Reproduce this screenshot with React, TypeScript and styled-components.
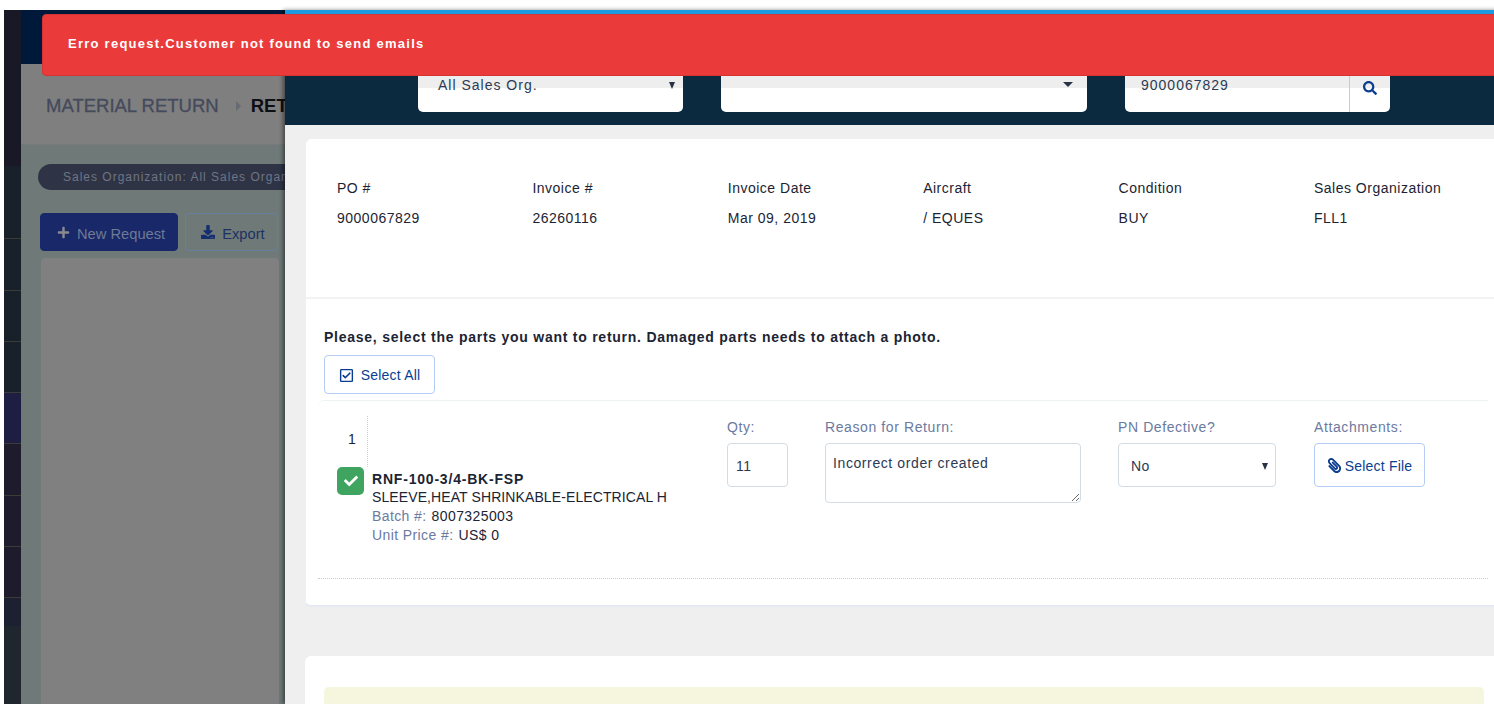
import styled, { createGlobalStyle } from 'styled-components';
import { FaCheck, FaDownload, FaPaperclip, FaPlus, FaRegCheckSquare, FaSearch } from 'react-icons/fa';

const GlobalStyle = createGlobalStyle`
  html, body {
    margin: 0;
    padding: 0;
    background: #fff;
    overflow: hidden;
  }
  * {
    box-sizing: border-box;
  }
`;

const Page = styled.div`
  position: relative;
  width: 1494px;
  height: 704px;
  overflow: hidden;
  padding: 10px 0 0 4px;
  font-family: "Liberation Sans", Arial, sans-serif;
  font-size: 14px;
  color: #1c2433;
`;

const Shell = styled.div`
  display: flex;
  height: 694px;
`;

const Sidebar = styled.div`
  width: 17px;
  display: flex;
  flex-direction: column;
  flex-shrink: 0;
`;

const SideItem = styled.div<{ $h: number; $tone: string; $line?: boolean }>`
  height: ${(p) => p.$h}px;
  background: ${(p) => p.$tone};
  border-bottom: ${(p) => (p.$line ? '1px solid #3b3b38' : 'none')};
`;

const SideFill = styled.div`
  flex: 1;
  background: #1f262e;
`;

const Main = styled.div`
  flex: 1;
  display: flex;
  flex-direction: column;
`;

const TopBar = styled.div`
  height: 54px;
  background: #00193a;
`;

const TitleBar = styled.div`
  height: 81px;
  background: #7f7f7f;
  border-bottom: 1px solid #767a7e;
  display: flex;
  align-items: center;
  padding: 4px 0 0 25px;
  font-size: 18.5px;
  color: #454a5c;
  -webkit-text-stroke: 0.3px #454a5c;
`;

const Caret = styled.span`
  width: 0;
  height: 0;
  margin: 0 10px 0 17px;
  border-left: 5px solid #666b73;
  border-top: 5px solid transparent;
  border-bottom: 5px solid transparent;
`;

const TitleStrong = styled.strong`
  color: #0d0f14;
  -webkit-text-stroke: 0;
`;

const Content = styled.div`
  flex: 1;
  background: #6f7a78;
  padding: 19px 0 0 17px;
`;

const FilterPill = styled.div`
  height: 26px;
  width: 340px;
  border-radius: 13px;
  background: #2e3446;
  color: #6e7584;
  font-size: 12px;
  letter-spacing: 1px;
  line-height: 26px;
  padding-left: 25px;
  white-space: nowrap;
`;

const ActionRow = styled.div`
  display: flex;
  gap: 7px;
  margin: 23px 0 7px 2px;
`;

const BackButton = styled.div<{ $primary?: boolean }>`
  height: 38px;
  padding: 3px 12px 0 ${(p) => (p.$primary ? 16 : 15)}px;
  display: flex;
  align-items: center;
  gap: 7px;
  border-radius: 4px;
  font-size: 14.7px;
  background: ${(p) => (p.$primary ? '#182868' : 'transparent')};
  color: ${(p) => (p.$primary ? '#6f7a94' : '#1d3163')};
  border: 1px solid ${(p) => (p.$primary ? '#182868' : '#68809c')};
  svg {
    font-size: ${(p) => (p.$primary ? 13 : 14)}px;
    color: ${(p) => (p.$primary ? '#8a8a8f' : '#152e70')};
    margin-top: -3px;
  }
`;

const BackCard = styled.div`
  width: 238px;
  height: 446px;
  margin-left: 3px;
  background: #808080;
  border-radius: 4px 4px 0 0;
`;

const Toast = styled.div`
  position: absolute;
  z-index: 3;
  left: 42px;
  top: 14px;
  width: 1500px;
  height: 62px;
  display: flex;
  align-items: center;
  padding: 0 0 4px 25px;
  background: #ea3a3a;
  border: 1px solid #d63434;
  border-radius: 4px;
  color: #fff;
  font-size: 13px;
  font-weight: 700;
  letter-spacing: 1.25px;
`;

const Drawer = styled.div`
  position: absolute;
  z-index: 2;
  left: 285px;
  top: 10px;
  width: 1240px;
  height: 694px;
  background: #efefef;
  border-top: 4px solid #1e9ae0;
  box-shadow: -2px 0 4px rgba(0, 0, 0, 0.45);
`;

const DrawerHeader = styled.div`
  height: 111px;
  background: #0b2a40;
  padding: 50px 0 0 133px;
  display: flex;
  gap: 38px;
`;

const HeaderField = styled.div<{ $w: number; $pad?: number }>`
  position: relative;
  width: ${(p) => p.$w}px;
  height: 48px;
  padding: 12px 0 0 ${(p) => p.$pad ?? 20}px;
  display: flex;
  justify-content: space-between;
  border-radius: 5px;
  background: linear-gradient(#eeeeee 24px, #ffffff 24px);
  color: #2b3a55;
  letter-spacing: 1px;
  line-height: 18px;
`;

const Arrow = styled.span<{ $right: number; $wide?: boolean; $flat?: boolean }>`
  width: 0;
  height: 0;
  margin: ${(p) => (p.$flat ? 0 : 6)}px ${(p) => p.$right}px 0 0;
  border-top: ${(p) => (p.$wide ? 5 : 7)}px solid #283244;
  border-left: ${(p) => (p.$wide ? 5 : 3.5)}px solid transparent;
  border-right: ${(p) => (p.$wide ? 5 : 3.5)}px solid transparent;
`;

const SearchAddon = styled.div`
  width: 41px;
  height: 48px;
  margin-top: -12px;
  display: flex;
  align-items: center;
  justify-content: center;
  border-left: 1px solid #b5ccf5;
  color: #0b3d91;
  font-size: 14px;
`;

const Card = styled.div`
  margin: 14px 0 0 20px;
  background: #fff;
  border-radius: 6px 0 0 6px;
  border-left: 1px solid #eef0f8;
  border-bottom: 2px solid #e6e8f4;
`;

const DetailGrid = styled.div`
  height: 160px;
  display: grid;
  grid-template-columns: repeat(6, 195.4px);
  padding: 41px 0 0 31px;
  border-bottom: 2px solid #f0f2f4;
  letter-spacing: 0.5px;
`;

const DetailCell = styled.div`
  display: flex;
  flex-direction: column;
  gap: 14px;
  line-height: 16px;
`;

const PartsArea = styled.div`
  padding: 29px 0 0 18px;
`;

const Prompt = styled.div`
  font-weight: 700;
  letter-spacing: 0.75px;
  line-height: 18px;
`;

const OutlineButton = styled.div<{ $w: number; $h: number; $gap: number }>`
  width: ${(p) => p.$w}px;
  height: ${(p) => p.$h}px;
  display: flex;
  align-items: center;
  justify-content: center;
  gap: ${(p) => p.$gap}px;
  padding-top: 1px;
  background: #fff;
  border: 1px solid #b5ccf5;
  border-radius: 4px;
  color: #0b3d91;
  letter-spacing: 0.2px;
  svg {
    font-size: 15px;
  }
`;

const SelectAll = styled(OutlineButton)`
  margin-top: 9px;
`;

const PartRow = styled.div`
  width: 1170px;
  height: 179px;
  margin: 6px 0 0 -6px;
  border-top: 1px solid #edf2f2;
  border-bottom: 1px dotted #c9ccd2;
  border-top-left-radius: 6px;
  display: grid;
  grid-template-columns: 409px 98px 293px 196px 1fr;
  padding-top: 15px;
`;

const PartInfo = styled.div`
  display: grid;
  grid-template-columns: 54px 1fr;
  grid-template-rows: 51px auto;
`;

const RowNumber = styled.div`
  padding: 15px 0 0 30px;
  border-right: 1px dotted #c9ccd2;
  margin-right: 4px;
  width: 50px;
`;

const CheckBox = styled.div`
  grid-column: 1;
  width: 27px;
  height: 28px;
  margin-left: 19px;
  display: flex;
  align-items: center;
  justify-content: center;
  background: #3fa45f;
  border-radius: 5px;
  color: #fff;
  font-size: 14px;
`;

const PartText = styled.div`
  grid-column: 2;
  letter-spacing: 0.4px;
  line-height: 19px;
  margin-top: 3px;
  white-space: nowrap;
`;

const PartName = styled.div`
  font-weight: 700;
  line-height: 18px;
  letter-spacing: 0.8px;
`;

const PartDescription = styled.div`
  letter-spacing: 0.1px;
`;

const PartLabel = styled.span`
  color: #6b7aa1;
  margin-right: 5px;
`;

const Field = styled.div`
  display: flex;
  flex-direction: column;
  gap: 6px;
`;

const FieldLabel = styled.label`
  color: #6b7aa1;
  letter-spacing: 0.6px;
  line-height: 20px;
  padding-top: 1px;
  height: 21px;
`;

const InputBox = styled.div<{ $w: number; $h: number; $pad: number }>`
  width: ${(p) => p.$w}px;
  height: ${(p) => p.$h}px;
  display: flex;
  align-items: center;
  justify-content: space-between;
  padding: 2px 0 0 ${(p) => p.$pad}px;
  border: 1px solid #d2dce4;
  border-radius: 4px;
  background: #fff;
  color: #2b3a55;
  letter-spacing: 0.5px;
`;

const TextArea = styled.textarea`
  width: 256px;
  height: 60px;
  padding: 11px 7px;
  border: 1px solid #d2dce4;
  border-radius: 4px;
  background: #fff;
  color: #2b3a55;
  font-family: inherit;
  font-size: 14px;
  letter-spacing: 0.6px;
  line-height: 16px;
  outline: none;
`;

const FileIcon = styled(FaPaperclip)`
  transform: scaleX(-1);
`;

const LowerCard = styled.div`
  height: 80px;
  margin: 49px 0 0 20px;
  padding: 31px 0 0 19px;
  background: #fff;
  border-radius: 6px 0 0 0;
`;

const Notice = styled.div`
  width: 1160px;
  height: 40px;
  background: #f6f6de;
  border-radius: 5px;
`;

const CardFoot = styled.div`
  height: 26px;
`;

const sideItems = [
  { h: 156, tone: '#191826' },
  { h: 73, tone: '#18212a', line: true },
  { h: 52, tone: '#18212a', line: true },
  { h: 51, tone: '#18212a', line: true },
  { h: 51, tone: '#18212a', line: true },
  { h: 51, tone: '#1e1e42', line: true },
  { h: 52, tone: '#1e1c2c', line: true },
  { h: 51, tone: '#1e1c2c', line: true },
  { h: 51, tone: '#1e1c2c', line: true },
  { h: 28, tone: '#1c2030' },
];

const details = [
  ['PO #', '9000067829'],
  ['Invoice #', '26260116'],
  ['Invoice Date', 'Mar 09, 2019'],
  ['Aircraft', '/ EQUES'],
  ['Condition', 'BUY'],
  ['Sales Organization', 'FLL1'],
];

const App = () => {
  return (
    <Page>
      <GlobalStyle />
      <Shell>
        <Sidebar>
          {sideItems.map((item, i) => (
            <SideItem key={i} $h={item.h} $tone={item.tone} $line={item.line} />
          ))}
          <SideFill />
        </Sidebar>
        <Main>
          <TopBar />
          <TitleBar>
            MATERIAL RETURN
            <Caret />
            <TitleStrong>RETURN</TitleStrong>
          </TitleBar>
          <Content>
            <FilterPill>Sales Organization: All Sales Organization</FilterPill>
            <ActionRow>
              <BackButton $primary>
                <FaPlus />
                New Request
              </BackButton>
              <BackButton>
                <FaDownload />
                Export
              </BackButton>
            </ActionRow>
            <BackCard />
          </Content>
        </Main>
      </Shell>

      <Drawer>
        <DrawerHeader>
          <HeaderField $w={265}>
            All Sales Org.
            <Arrow $right={8} />
          </HeaderField>
          <HeaderField $w={366}>
            <span />
            <Arrow $right={14} $wide />
          </HeaderField>
          <HeaderField $w={265} $pad={16}>
            <span>9000067829</span>
            <SearchAddon>
              <FaSearch />
            </SearchAddon>
          </HeaderField>
        </DrawerHeader>

        <Card>
          <DetailGrid>
            {details.map(([label, value]) => (
              <DetailCell key={label}>
                <span>{label}</span>
                <span>{value}</span>
              </DetailCell>
            ))}
          </DetailGrid>
          <PartsArea>
            <Prompt>Please, select the parts you want to return. Damaged parts needs to attach a photo.</Prompt>
            <SelectAll $w={111} $h={39} $gap={7}>
              <FaRegCheckSquare />
              Select All
            </SelectAll>
            <PartRow>
              <PartInfo>
                <RowNumber>1</RowNumber>
                <span />
                <CheckBox>
                  <FaCheck />
                </CheckBox>
                <PartText>
                  <PartName>RNF-100-3/4-BK-FSP</PartName>
                  <PartDescription>SLEEVE,HEAT SHRINKABLE-ELECTRICAL H</PartDescription>
                  <div>
                    <PartLabel>Batch #:</PartLabel>8007325003
                  </div>
                  <div>
                    <PartLabel>Unit Price #:</PartLabel>US$ 0
                  </div>
                </PartText>
              </PartInfo>
              <Field>
                <FieldLabel>Qty:</FieldLabel>
                <InputBox $w={61} $h={44} $pad={8}>11</InputBox>
              </Field>
              <Field>
                <FieldLabel>Reason for Return:</FieldLabel>
                <TextArea defaultValue="Incorrect order created" />
              </Field>
              <Field>
                <FieldLabel>PN Defective?</FieldLabel>
                <InputBox $w={158} $h={44} $pad={12}>
                  No
                  <Arrow $right={7} $flat />
                </InputBox>
              </Field>
              <Field>
                <FieldLabel>Attachments:</FieldLabel>
                <OutlineButton $w={111} $h={44} $gap={3}>
                  <FileIcon />
                  Select File
                </OutlineButton>
              </Field>
            </PartRow>
          </PartsArea>
          <CardFoot />
        </Card>

        <LowerCard>
          <Notice />
        </LowerCard>
      </Drawer>

      <Toast>Erro request.Customer not found to send emails</Toast>
    </Page>
  );
};

export default App;
